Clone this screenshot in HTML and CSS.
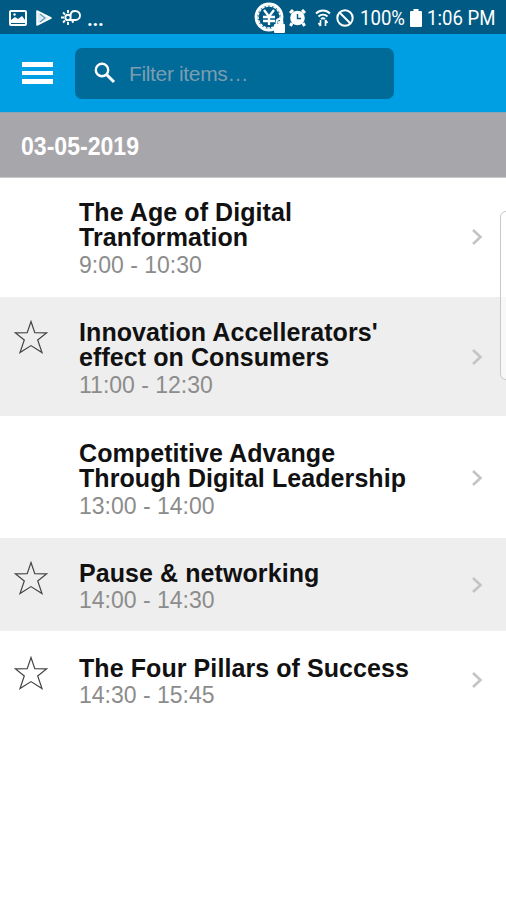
FILE: index.html
```html
<!DOCTYPE html>
<html lang="en">
<head>
    <meta charset="UTF-8">
    <meta name="viewport" content="width=device-width, initial-scale=1.0">
    <title>Agenda</title>
    <link rel="stylesheet" href="styles.css">
</head>
<body>
    <svg class="defs" width="0" height="0">
        <symbol id="star" viewBox="0 0 34 34">
            <path d="M17 1.500 L20.800 12.600 L32.800 12.800 L23.700 20 L28 32.500 L17 25.600 L6 32.500 L10.300 20 L1.200 12.800 L13.200 12.600 Z"/>
        </symbol>
        <symbol id="chevron" viewBox="0 0 12 18">
            <path d="M2 2 L9.500 9 L2 16"/>
        </symbol>
    </svg>

    <div class="status-bar">
        <div class="status-left">
            <svg width="18" height="16" viewBox="0 0 18 16">
                <rect x="1" y="1" width="16" height="14" rx="1" fill="none" stroke="#fff" stroke-width="2"/>
                <path d="M2 13V10l4-3 3 2 4-3 3 4v3z" fill="#fff"/>
                <circle cx="5.500" cy="4.500" r="1.200" fill="#fff"/>
            </svg>
            <svg width="16" height="16" viewBox="0 0 16 16">
                <path d="M1 1L15 8L1 15Z" fill="#dcebf3" stroke="#fff" stroke-width="1.500" stroke-linejoin="round"/>
                <path d="M4 4l5 4-5 4" fill="none" stroke="#5f9aba" stroke-width="1.200"/>
            </svg>
            <svg width="20" height="17" viewBox="0 0 20 17">
                <g fill="none" stroke="#fff" stroke-width="1.900">
                    <circle cx="7" cy="8.500" r="2.700"/>
                    <path d="M7 1v3M7 13v3M0 8.500h3M2 3.500l2 2M2 13.500l2-2M11 12l1.500 1.500"/>
                    <path d="M9.500 7C9.500 3.500 11.500 2 14 2c3 0 5 2 5 4.500S17 11 14.500 11H9"/>
                </g>
            </svg>
            <span class="dots">...</span>
        </div>
        <div class="status-right">
            <svg class="icon-yen" width="32" height="32" viewBox="0 0 32 32">
                <circle cx="15" cy="15" r="13" fill="none" stroke="#fff" stroke-width="2.800"/>
                <circle cx="15" cy="15" r="11" fill="none" stroke="#fff" stroke-width="1.500" stroke-dasharray="3 1"/>
                <path d="M10 8l5 6.500L20 8M9 15h12M9 19h12M15 14v9" fill="none" stroke="#fff" stroke-width="2.300"/>
                <rect x="20" y="22" width="11" height="9" rx="1" fill="#fff"/>
                <path d="M22.500 22v-2a3 3 0 0 1 6 0v2" fill="none" stroke="#fff" stroke-width="1.800"/>
            </svg>
            <svg class="icon-alarm" width="17" height="18" viewBox="0 0 17 18">
                <circle cx="8.500" cy="9" r="7.300" fill="#fff"/>
                <path d="M1 4l3-3M16 4l-3-3M3 14l-1.500 3M14 14l1.500 3" stroke="#fff" stroke-width="3"/>
                <path d="M8.500 5v4.500H12" fill="none" stroke="#005a86" stroke-width="1.400"/>
            </svg>
            <svg class="icon-wifi" width="16" height="18" viewBox="0 0 16 18">
                <path d="M1 4.500C5 .5 11 .5 15 4.500M3.500 7.500c2.500-2.500 6.500-2.500 9 0M6 10c1.200-1 2.800-1 4 0" fill="none" stroke="#fff" stroke-width="1.900"/>
                <path d="M5.500 11v6M3.500 14l2 3M10.500 17v-6M12.500 14l-2-3" fill="none" stroke="#fff" stroke-width="1.600"/>
            </svg>
            <svg class="icon-block" width="18" height="18" viewBox="0 0 18 18">
                <circle cx="9" cy="9" r="7.700" fill="none" stroke="#fff" stroke-width="2"/>
                <path d="M3.500 3.500l11 11" stroke="#fff" stroke-width="2"/>
            </svg>
            <span class="percent">100%</span>
            <svg class="icon-battery" width="12" height="18" viewBox="0 0 12 18">
                <path d="M3.500 0h5v2H11q1 0 1 1v14q0 1-1 1H1q-1 0-1-1V3q0-1 1-1h2.500z" fill="#fff"/>
            </svg>
            <span class="clock">1:06 PM</span>
        </div>
    </div>

    <div class="toolbar">
        <div class="menu">
            <span></span>
            <span></span>
            <span></span>
        </div>
        <div class="search">
            <svg width="22" height="22" viewBox="0 0 22 22">
                <circle cx="8" cy="8" r="6.200" fill="none" stroke="#fff" stroke-width="2.400"/>
                <path d="M12.500 12.500L20 20" stroke="#fff" stroke-width="3"/>
            </svg>
            <span class="placeholder">Filter items…</span>
        </div>
    </div>

    <div class="date"><span>03-05-2019</span></div>

    <div class="list">
        <div class="row first">
            <div class="fav"></div>
            <div class="info">
                <div class="title">The Age of Digital<br>Tranformation</div>
                <div class="time">9:00 - 10:30</div>
            </div>
            <svg class="chevron"><use href="#chevron"/></svg>
        </div>
        <div class="row gray">
            <div class="fav"><svg class="star"><use href="#star"/></svg></div>
            <div class="info">
                <div class="title">Innovation Accellerators'<br>effect on Consumers</div>
                <div class="time">11:00 - 12:30</div>
            </div>
            <svg class="chevron"><use href="#chevron"/></svg>
        </div>
        <div class="row">
            <div class="fav"></div>
            <div class="info">
                <div class="title">Competitive Advange<br>Through Digital Leadership</div>
                <div class="time">13:00 - 14:00</div>
            </div>
            <svg class="chevron"><use href="#chevron"/></svg>
        </div>
        <div class="row gray short">
            <div class="fav"><svg class="star"><use href="#star"/></svg></div>
            <div class="info">
                <div class="title">Pause &amp; networking</div>
                <div class="time">14:00 - 14:30</div>
            </div>
            <svg class="chevron"><use href="#chevron"/></svg>
        </div>
        <div class="row last">
            <div class="fav"><svg class="star"><use href="#star"/></svg></div>
            <div class="info">
                <div class="title">The Four Pillars of Success</div>
                <div class="time">14:30 - 15:45</div>
            </div>
            <svg class="chevron"><use href="#chevron"/></svg>
        </div>
    </div>

    <div class="edge-handle"></div>
</body>
</html>
```
FILE: styles.css
```css
* {
    box-sizing: border-box;
}
body {
    position: relative;
    margin: 0;
    height: 900px;
    overflow: hidden;
    background-color: #fff;
    font-family: "Liberation Sans", Arial, sans-serif;
}
svg {
    display: block;
    flex: none;
}
.defs {
    position: absolute;
}
.status-bar {
    display: flex;
    justify-content: space-between;
    height: 34px;
    padding: 0 10px 0 9px;
    background-color: #005a84;
    color: #fff;
    font-family: Roboto, sans-serif;
    font-size: 20px;
}
.status-left,
.status-right {
    display: flex;
    align-items: center;
    height: 35px;
}
.status-left {
    gap: 9px;
}
.status-left .dots {
    margin-left: -3px;
    padding-top: 2px;
    font-weight: bold;
    letter-spacing: -0.3px;
}
.icon-yen {
    margin-right: 3px;
}
.icon-alarm {
    margin-right: 9px;
}
.icon-wifi {
    margin-right: 5px;
}
.icon-block {
    margin-right: 6px;
}
.percent,
.clock {
    transform: scaleX(0.93);
    transform-origin: 0 50%;
    white-space: nowrap;
}
.percent {
    width: 50px;
}
.icon-battery {
    margin-right: 5px;
}
.clock {
    width: 69px;
}
.toolbar {
    display: flex;
    align-items: center;
    height: 78px;
    padding-left: 22px;
    background-color: #009ee3;
}
.menu {
    display: flex;
    flex-direction: column;
    gap: 4px;
    width: 31px;
    margin-right: 22px;
}
.menu span {
    height: 4.5px;
    background-color: #fff;
}
.search {
    display: flex;
    align-items: center;
    width: 319px;
    height: 51px;
    padding-left: 19px;
    border-radius: 7px;
    background-color: #006a98;
}
.placeholder {
    margin-left: 13px;
    padding-top: 2px;
    color: #7b9db0;
    font-size: 21px;
    letter-spacing: -0.35px;
}
.date {
    height: 66px;
    padding-left: 21px;
    border-top: 1px solid #8aa5b4;
    border-bottom: 1px solid #c9c9cb;
    background-color: #a7a6ab;
    color: #fff;
    font-size: 25px;
    font-weight: bold;
    line-height: 66px;
}
.date span {
    display: inline-block;
    transform: scaleX(0.923);
    transform-origin: 0 50%;
}
.row {
    display: flex;
    height: 121px;
    padding: 24px 23px 0 14px;
}
.row.first {
    height: 119px;
    padding-top: 22px;
}
.row.gray {
    height: 119px;
    padding-top: 23px;
    margin-bottom: 1px;
    background-color: #eee;
}
.row.gray.short {
    height: 93px;
    margin-bottom: 0;
}
.row.last {
    height: 95px;
    padding-top: 25px;
}
.fav {
    width: 65px;
}
.star {
    width: 34px;
    height: 34px;
    fill: none;
    stroke: #444;
    stroke-width: 1.2;
}
.info {
    flex: 1;
}
.title {
    color: #111;
    font-size: 25px;
    font-weight: bold;
    line-height: 25.3px;
    letter-spacing: 0.08px;
    white-space: nowrap;
}
.time {
    color: #8c8c8c;
    font-size: 23px;
    line-height: 29px;
}
.chevron {
    width: 12px;
    height: 18px;
    margin-top: 28px;
    fill: none;
    stroke: #c4c4c4;
    stroke-width: 2.6;
}
.short .chevron,
.last .chevron {
    margin-top: 15px;
}
.edge-handle {
    position: absolute;
    top: 211px;
    right: -8px;
    width: 14px;
    height: 169px;
    border: 1px solid #c8c8c8;
    border-radius: 6px;
    background-color: rgba(255, 255, 255, 0.6);
}
```
